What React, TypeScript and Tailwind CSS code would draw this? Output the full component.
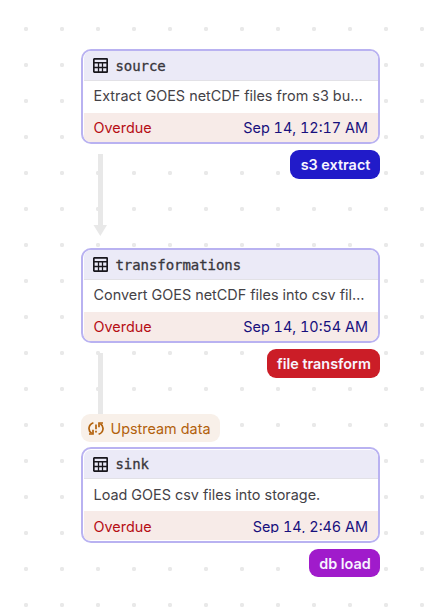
import type { ReactNode } from "react";

function TableIcon() {
  return (
    <svg className="size-[15px] shrink-0" viewBox="0 0 15 15" fill="none" stroke="#19171d">
      <rect x="0.8" y="0.8" width="13.4" height="13.4" rx="0.8" strokeWidth="1.7" />
      <path d="M1 4.8H14" strokeWidth="1.6" />
      <path d="M1 9.5H14M5.5 5V14M9.5 5V14" strokeWidth="1.3" />
    </svg>
  );
}

function SyncProblemIcon() {
  return (
    <svg className="h-[15px] w-[16px] shrink-0" viewBox="0 0 16 15" fill="none" stroke="#b2610c" strokeWidth="1.7">
      <path d="M5.4 1.7C0 3.6 -0.2 9.8 3.6 12.2" />
      <path d="M1 13H5V8.8" />
      <path d="M10.6 13.3C16 11.4 16.2 5.2 12.4 2.8" />
      <path d="M15 2H11V6.2" />
      <path d="M8 3.6V8.3M8 9.7V11.4" />
    </svg>
  );
}

interface CardProps {
  name: string;
  description: string;
  date: string;
  last?: boolean;
}

function Card({ name, description, date, last = false }: CardProps) {
  return (
    <section
      className={`flex flex-col overflow-hidden rounded-[10px] border-2 border-[#b9b2f1] bg-white ${last ? "h-24 pt-px leading-[31px]" : "h-[95px] leading-[29px]"}`}
    >
      <header
        className={`ml-px flex shrink-0 items-center gap-[7.5px] rounded-t-[7px] border-b border-[#e2e1e6] bg-[#ebeaf7] pl-[9px] ${last ? "h-[29px]" : "h-[30px]"}`}
      >
        <TableIcon />
        <h2 className="font-['DejaVu_Sans_Mono',monospace] text-[14px] leading-5 tracking-[-0.06px] text-[#38363c] [-webkit-text-stroke:0.3px_#38363c]">
          {name}
        </h2>
      </header>
      <p className="h-8 shrink-0 truncate pr-[11px] pl-[10.5px] text-[#444247]">{description}</p>
      <footer className="ml-px flex h-[29px] shrink-0 items-start justify-between overflow-hidden bg-[#f7ebe8] pr-[10px] pl-[9.5px]">
        <span className="text-[#b60e14]">Overdue</span>
        <span className={`overflow-hidden text-[#17107d] tabular-nums ${last ? "h-[22px]" : ""}`}>{date}</span>
      </footer>
    </section>
  );
}

function Tag({ className, children }: { className: string; children: ReactNode }) {
  return (
    <span className={`mt-1.5 flex items-center justify-center rounded-[9px] pl-px font-semibold text-[#f7f5ff] ${className}`}>
      {children}
    </span>
  );
}

export default function App() {
  return (
    <main className="h-[616px] w-[444px] overflow-hidden bg-white bg-[radial-gradient(circle_at_center,#e9e9e9_1.8px,transparent_2.5px)] bg-[length:36px_36px] bg-[position:8px_11px] pt-[49px] pl-[81px] font-['Inter',sans-serif] text-[14.4px]">
      <div className="flex w-[299px] flex-col">
        <Card name="source" description="Extract GOES netCDF files from s3 bucket." date="Sep 14, 12:17 AM" />
        <div className="flex h-[104px] items-start justify-between">
          <svg className="mt-[10px] ml-3 h-[82px] w-[14px]" viewBox="0 0 14 82" fill="#e8e8e8">
            <path d="M5 0H10V71H14L7.3 82L0.5 71H5Z" />
          </svg>
          <Tag className="h-[29px] w-[90px] bg-[#211bc9]">s3 extract</Tag>
        </div>
        <Card name="transformations" description="Convert GOES netCDF files into csv files." date="Sep 14, 10:54 AM" />
        <div className="flex h-[71px] items-start justify-between">
          <div className="mt-[10px] ml-[17px] h-[61px] w-[5px] bg-[#e8e8e8]" />
          <Tag className="h-[29px] w-[113px] bg-[#cb1d27]">file transform</Tag>
        </div>
        <div className="mb-[5px] flex h-7 w-[139px] items-center gap-[6.5px] rounded-[9px] bg-[#f8f0e9] pl-[7px] text-[#b2610c]">
          <SyncProblemIcon />
          <span className="pt-[2px]">Upstream data</span>
        </div>
        <Card name="sink" description="Load GOES csv files into storage." date="Sep 14, 2:46 AM" last />
        <div className="flex justify-end">
          <Tag className="h-[28px] w-[71px] bg-[#a01bcb] pt-px">db load</Tag>
        </div>
      </div>
    </main>
  );
}
